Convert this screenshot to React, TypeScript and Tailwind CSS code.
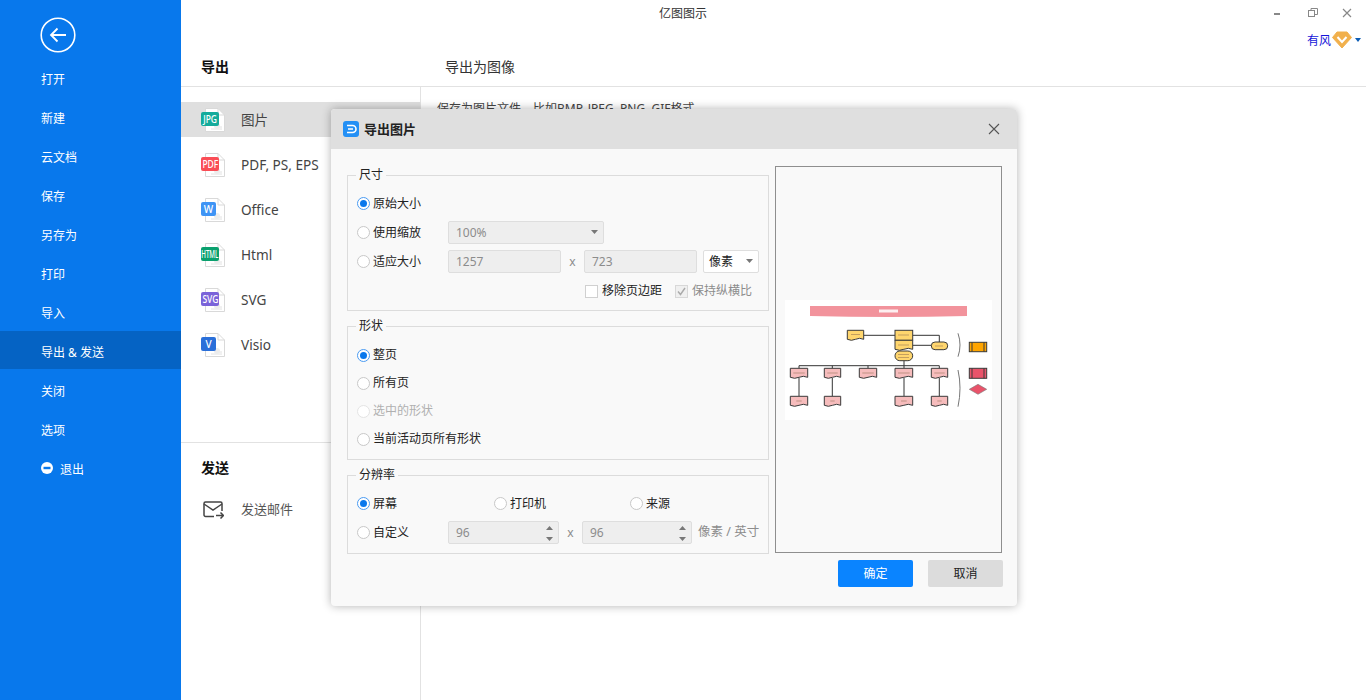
import type { ReactNode } from 'react'

const menuItems = ['打开', '新建', '云文档', '保存', '另存为', '打印', '导入', '导出 & 发送', '关闭', '选项']

const exportItems = [
  { label: '图片', tag: 'JPG', color: 'bg-[#14ab9b]', active: true },
  { label: 'PDF, PS, EPS', tag: 'PDF', color: 'bg-[#fa4d56]', active: false },
  { label: 'Office', tag: 'W', color: 'bg-[#3e94f5]', active: false },
  { label: 'Html', tag: 'HTML', color: 'bg-[#0aa06e]', active: false },
  { label: 'SVG', tag: 'SVG', color: 'bg-[#7a63d9]', active: false },
  { label: 'Visio', tag: 'V', color: 'bg-[#2a6fd9]', active: false },
]

function FileIcon({ tag, color }: { tag: string; color: string }) {
  const short = tag.length === 1
  return (
    <div className="relative h-[24px] w-[24px] shrink-0">
      <svg className="absolute left-[4px] top-0" width="20" height="24" viewBox="0 0 20 24" fill="none">
        <path d="M0.5 0.5H13L19.5 7V23.5H0.5Z" fill="#fff" stroke="#d9d9d9" />
        <path d="M13 0.5V7H19.5" stroke="#d9d9d9" />
        <path d="M11 19H17M6 21H17" stroke="#e2e2e2" />
        <circle cx="12" cy="18" r="3" fill="#ececec" />
      </svg>
      <div
        className={`absolute left-0 top-[4px] flex h-[14px] items-center justify-center rounded-[2px] text-[10px] font-medium leading-none text-white ${color} ${short ? 'w-[15px]' : 'w-[18px]'}`}
      >
        <span className={tag === 'HTML' ? 'scale-x-[0.62]' : tag.length === 3 ? 'scale-x-[0.85]' : ''}>{tag}</span>
      </div>
    </div>
  )
}

function Radio({ checked, disabled, label }: { checked?: boolean; disabled?: boolean; label: string }) {
  return (
    <div className={`flex items-center gap-[3px] ${disabled ? 'text-[#b0b0b0]' : 'text-[#222]'}`}>
      <span
        className={`flex h-[13px] w-[13px] items-center justify-center rounded-full border bg-white ${
          checked ? 'border-[#4a9bf2]' : disabled ? 'border-[#e4e4e4]' : 'border-[#c8c8c8]'
        }`}
      >
        {checked && <span className="h-[7px] w-[7px] rounded-full bg-[#0a78ec]" />}
      </span>
      <span>{label}</span>
    </div>
  )
}

function Group({ title, className, children }: { title: string; className: string; children: ReactNode }) {
  return (
    <fieldset className={`border border-[#dcdcdc] pl-[9px] ${className}`}>
      <legend className="-ml-[1px] h-[18px] px-[3px] text-[12px] leading-[18px] text-[#222]">{title}</legend>
      {children}
    </fieldset>
  )
}

function Field({ value, className, children }: { value: string; className: string; children?: ReactNode }) {
  return (
    <div
      className={`relative flex h-[23px] items-center rounded-[2px] border border-[#dedede] bg-[#eeeeee] pl-[7px] text-[12px] text-[#8c8c8c] ${className}`}
    >
      {value}
      {children}
    </div>
  )
}

function Caret({ className }: { className: string }) {
  return (
    <svg className={`absolute ${className}`} width="7" height="4" viewBox="0 0 7 4">
      <path d="M0 0H7L3.5 4Z" fill="#777" />
    </svg>
  )
}

function Spinner() {
  return (
    <svg className="absolute right-[5px] top-[4px]" width="7" height="15" viewBox="0 0 7 15">
      <path d="M3.5 0L7 4H0Z" fill="#777" />
      <path d="M0 11H7L3.5 15Z" fill="#777" />
    </svg>
  )
}

function Preview() {
  const drops = [14, 47.3, 83, 119, 154.3]
  const first = [
    [5.3, 17.4],
    [39.3, 16.4],
    [74.3, 17.4],
    [110, 17.7],
    [146.3, 16.4],
  ]
  const second = [
    [5.3, 17.4, 14],
    [39.3, 16.4, 47.3],
    [110, 17.7, 119],
    [146.3, 16.4, 154.3],
  ]
  const doc = (x: number, y: number, w: number, h: number, fill: string, key?: number) => (
    <path
      key={key}
      d={`M${x} ${y}H${x + w}V${y + h - 1}Q${x + w * 0.75} ${y + h - 3} ${x + w / 2} ${y + h - 1}T${x} ${y + h - 1}Z`}
      fill={fill}
      stroke="#3a3a3a"
      strokeWidth="1"
    />
  )
  return (
    <svg width="207" height="120" viewBox="0 0 207 120" className="bg-white">
      <path d="M25 6H182V16Q104 18 25 16Z" fill="#f2939c" />
      <rect x="94" y="9.5" width="19" height="3" fill="#fff" opacity="0.85" />
      <g stroke="#333" strokeWidth="1" fill="none">
        <path d="M78.7 35.3H110M127.7 35.3H154.3V42M127.7 45.3H146.3M119 60.7V65.7M14 65.7H154.3" />
        {drops.map((x) => (
          <path key={x} d={`M${x} 65.7V68.3`} />
        ))}
        {second.map(([, , c]) => (
          <path key={c} d={`M${c} 78V96.3`} />
        ))}
      </g>
      {doc(62.3, 30.3, 16.4, 10, '#ffd66e')}
      <rect x="110" y="30.3" width="17.7" height="10" fill="#ffd66e" stroke="#3a3a3a" strokeWidth="1" />
      {doc(110, 40.3, 17.7, 10, '#ffd66e')}
      <rect x="110" y="51" width="17.7" height="9.7" rx="4.8" fill="#ffd66e" stroke="#3a3a3a" strokeWidth="1" />
      <rect x="146.3" y="42" width="16.4" height="7.7" rx="3.8" fill="#ffd66e" stroke="#3a3a3a" strokeWidth="1" />
      {first.map(([x, w], i) => doc(x, 68.3, w, 10, '#f6bcbc', i))}
      {second.map(([x, w], i) => doc(x, 96.3, w, 10, '#f6bcbc', i))}
      <g fill="#8a6a50" opacity="0.5">
        <rect x="66" y="34" width="9" height="1" />
        <rect x="113" y="34.5" width="11" height="1" />
        <rect x="113" y="44.5" width="11" height="1" />
        <rect x="113" y="54" width="11" height="1" />
        <rect x="113" y="57" width="11" height="1" />
        <rect x="150" y="45.5" width="8" height="1" />
        {first.map(([x, w]) => (
          <rect key={x} x={x + 3} y="72.5" width={w - 6} height="1" />
        ))}
        {second.map(([x, w]) => (
          <rect key={x} x={x + 6} y="100.5" width={w - 12} height="1" />
        ))}
      </g>
      <path d="M173 33.3Q177 45 173 56.7M173 70Q177 88 173 106.7" fill="none" stroke="#777" strokeWidth="1" />
      <rect x="184.3" y="42.3" width="17.4" height="9.4" fill="#ffa500" stroke="#3a3a3a" strokeWidth="1" />
      <path d="M187 42.3V51.7M199 42.3V51.7" stroke="#3a3a3a" strokeWidth="1" />
      <rect x="184.3" y="68.3" width="17.4" height="10" fill="#e9536a" stroke="#3a3a3a" strokeWidth="1" />
      <path d="M187 68.3V78.3M199 68.3V78.3" stroke="#3a3a3a" strokeWidth="1" />
      <path d="M193 84.3L201.7 89.3L193 94.3L184.3 89.3Z" fill="#e9536a" stroke="#777" strokeWidth="0.6" />
    </svg>
  )
}

function ExportDialog() {
  return (
    <div className="absolute left-[331px] top-[109px] flex h-[497px] w-[686px] flex-col overflow-hidden rounded-[4px] bg-[#f9f9f9] shadow-[0_0_10px_rgba(0,0,0,0.3)]">
      <div className="flex h-[40px] shrink-0 items-center justify-between bg-[#dfdfdf] pl-[12px] pr-[17px]">
        <div className="flex items-center gap-[5px]">
          <svg width="16" height="16" viewBox="0 0 16 16">
            <rect width="16" height="16" rx="3" fill="#2490f5" />
            <path d="M4 4.5H9.5A3.5 3.5 0 0 1 9.5 11.5H4M5 8H10" fill="none" stroke="#fff" strokeWidth="1.6" />
          </svg>
          <span className="mt-[2px] text-[13px] font-bold text-[#222]">导出图片</span>
        </div>
        <svg width="12" height="12" viewBox="0 0 12 12">
          <path d="M1 1L11 11M11 1L1 11" stroke="#555" strokeWidth="1.1" />
        </svg>
      </div>

      <div className="flex gap-[6px] pl-[16px] pt-[17px]">
        <div className="flex w-[422px] flex-col gap-[6px] text-[12px]">
          <Group title="尺寸" className="h-[145px]">
            <div className="mt-[8px] flex h-[23px] items-center">
              <Radio checked label="原始大小" />
            </div>
            <div className="mt-[6px] flex h-[23px] items-center">
              <div className="w-[91px]">
                <Radio label="使用缩放" />
              </div>
              <Field value="100%" className="w-[156px]">
                <Caret className="right-[5px] top-[8px]" />
              </Field>
            </div>
            <div className="mt-[6px] flex h-[23px] items-center">
              <div className="w-[91px]">
                <Radio label="适应大小" />
              </div>
              <Field value="1257" className="w-[113px]" />
              <span className="w-[23px] text-center text-[#8c8c8c]">x</span>
              <Field value="723" className="w-[113px]" />
              <div className="relative ml-[6px] flex h-[23px] w-[56px] items-center rounded-[2px] border border-[#dedede] bg-white pl-[5px] text-[#222]">
                像素
                <Caret className="right-[5px] top-[8px]" />
              </div>
            </div>
            <div className="mt-[8px] flex h-[20px] items-center pl-[228px]">
              <span className="h-[13px] w-[13px] border border-[#d0d0d0] bg-white" />
              <span className="ml-[4px] text-[#222]">移除页边距</span>
              <span className="ml-[13px] flex h-[13px] w-[13px] items-center justify-center border border-[#d8d8d8] bg-[#f0f0f0]">
                <svg width="9" height="9" viewBox="0 0 9 9">
                  <path d="M1 4.5L3.5 7.5L8 1" fill="none" stroke="#aaa" strokeWidth="1.4" />
                </svg>
              </span>
              <span className="ml-[4px] text-[#8c8c8c]">保持纵横比</span>
            </div>
          </Group>

          <Group title="形状" className="h-[143px]">
            <div className="pt-[6px]">
              <div className="flex h-[28px] items-center">
                <Radio checked label="整页" />
              </div>
              <div className="flex h-[28px] items-center">
                <Radio label="所有页" />
              </div>
              <div className="flex h-[28px] items-center">
                <Radio disabled label="选中的形状" />
              </div>
              <div className="flex h-[28px] items-center">
                <Radio label="当前活动页所有形状" />
              </div>
            </div>
          </Group>

          <Group title="分辨率" className="h-[88px]">
            <div className="mt-[8px] flex h-[23px] items-center">
              <div className="w-[137px]">
                <Radio checked label="屏幕" />
              </div>
              <div className="w-[136px]">
                <Radio label="打印机" />
              </div>
              <Radio label="来源" />
            </div>
            <div className="mt-[6px] flex h-[23px] items-center">
              <div className="w-[91px]">
                <Radio label="自定义" />
              </div>
              <Field value="96" className="w-[111px]">
                <Spinner />
              </Field>
              <span className="w-[23px] text-center text-[#8c8c8c]">x</span>
              <Field value="96" className="w-[110px]">
                <Spinner />
              </Field>
              <span className="ml-[6px] whitespace-nowrap text-[12.5px] text-[#8c8c8c]">像素 / 英寸</span>
            </div>
          </Group>
        </div>

        <div className="flex h-[387px] w-[227px] items-center justify-center border border-[#8f8f8f] bg-[#f9f9f9]">
          <Preview />
        </div>
      </div>

      <div className="mt-[6px] flex justify-end gap-[15px] pr-[14px] text-[12px]">
        <button className="h-[27px] w-[75px] rounded-[2px] bg-[#0a84ff] text-white">确定</button>
        <button className="h-[27px] w-[75px] rounded-[2px] bg-[#dcdcdc] text-[#222]">取消</button>
      </div>
    </div>
  )
}

export default function App() {
  return (
    <div className="relative flex h-[700px] w-full overflow-hidden bg-white font-['Noto_Sans','Noto_Sans_CJK_SC',sans-serif]">
      <aside className="w-[181px] shrink-0 bg-[#0878ec] text-[12px] text-white">
        <div className="h-[60px] pl-[40px] pt-[17px]">
          <svg width="36" height="36" viewBox="0 0 36 36" fill="none" stroke="#fff">
            <circle cx="18" cy="18" r="16.8" strokeWidth="1.6" />
            <path d="M26 18H11M17.5 11.5L11 18L17.5 24.5" strokeWidth="1.8" />
          </svg>
        </div>
        {menuItems.map((item) =>
          item === '导出 & 发送' ? (
            <div key={item} className="-mt-[2px] mb-[3px] flex h-[38px] items-center bg-[#0563c4] pl-[41px] pt-[6px]">
              {item}
            </div>
          ) : (
            <div key={item} className="flex h-[39px] items-center pl-[41px]">
              {item}
            </div>
          ),
        )}
        <div className="flex h-[39px] items-center gap-[7px] pl-[41px]">
          <svg className="-mt-[3px]" width="12" height="12" viewBox="0 0 12 12">
            <circle cx="6" cy="6" r="6" fill="#fff" />
            <rect x="2.5" y="4.8" width="7" height="2.4" fill="#0878ec" />
          </svg>
          退出
        </div>
      </aside>

      <main className="flex min-w-0 flex-1 flex-col">
        <div className="flex h-[87px] shrink-0 border-b border-[#e2e2e2] text-[14px]">
          <div className="flex w-[240px] items-end pb-[9px] pl-[20px] font-bold text-[#111]">导出</div>
          <div className="flex items-end pb-[9px] pl-[24px] text-[#333]">导出为图像</div>
        </div>
        <div className="flex min-h-0 flex-1">
          <div className="flex w-[240px] shrink-0 flex-col border-r border-[#e2e2e2] pt-[15px]">
            <div className="flex flex-col gap-[10px]">
              {exportItems.map((item) => (
                <div
                  key={item.label}
                  className={`flex h-[35px] items-center gap-[16px] pl-[20px] text-[13.6px] text-[#444] ${item.active ? 'bg-[#dfdfdf]' : ''}`}
                >
                  <FileIcon tag={item.tag} color={item.color} />
                  <span className="mt-[2px] whitespace-nowrap">{item.label}</span>
                </div>
              ))}
            </div>
            <div className="mt-[80px] border-t border-[#e2e2e2] pl-[20px] pt-[14px]">
              <div className="text-[14px] font-bold text-[#111]">发送</div>
              <div className="mt-[19px] flex h-[26px] items-center gap-[17px] pl-[2px] text-[13px] text-[#555]">
                <svg width="21" height="18" viewBox="0 0 21 18" fill="none" stroke="#444" strokeWidth="1.5">
                  <path d="M11 15.5H2.5A1.5 1.5 0 0 1 1 14V2.5A1.5 1.5 0 0 1 2.5 1H17.5A1.5 1.5 0 0 1 19 2.5V10" />
                  <path d="M1 3L10 9L19 3" />
                  <path d="M13 14.5H20M17.5 11.5L20.5 14.5L17.5 17.5" />
                </svg>
                发送邮件
              </div>
            </div>
          </div>
          <div className="pl-[16px] pt-[12px] text-[12px] leading-[20px] text-[#444]">
            保存为图片文件，比如BMP, JPEG, PNG, GIF格式。
          </div>
        </div>
      </main>

      {/* window caption, floats over both columns */}
      <div className="absolute inset-x-0 top-0 h-[50px] text-[12px]">
        <div className="pt-[5px] text-center leading-[17px] text-[#333]">亿图图示</div>
        <div className="absolute right-[14px] top-[8px] flex items-center gap-[25px]">
          <svg width="10" height="10" viewBox="0 0 10 10">
            <rect x="1" y="5" width="6" height="2" fill="#888" />
          </svg>
          <svg width="10" height="10" viewBox="0 0 10 10" fill="none" stroke="#888">
            <rect x="0.5" y="2.5" width="6" height="6" />
            <path d="M3 2.5V0.5H9.5V6.5H6.5" />
          </svg>
          <svg className="-ml-[1px]" width="10" height="10" viewBox="0 0 10 10">
            <path d="M1 1L9 9M9 1L1 9" stroke="#888" strokeWidth="1.2" />
          </svg>
        </div>
        <div className="absolute right-[5px] top-[30px] flex items-center">
          <span className="mt-[2px] text-[#1414d8]">有风</span>
          <svg className="ml-[1px]" width="20" height="18" viewBox="0 0 20 18">
            <path d="M5 1H15L19.5 6.5L10 17L0.5 6.5Z" fill="#f1b04c" stroke="#f1b04c" strokeLinejoin="round" />
            <path d="M5.5 6L10 11L14.5 6" fill="none" stroke="#fff" strokeWidth="2" />
          </svg>
          <svg className="ml-[3px]" width="6" height="4" viewBox="0 0 6 4">
            <path d="M0 0H6L3 4Z" fill="#0a5bb5" />
          </svg>
        </div>
      </div>

      <ExportDialog />
    </div>
  )
}
